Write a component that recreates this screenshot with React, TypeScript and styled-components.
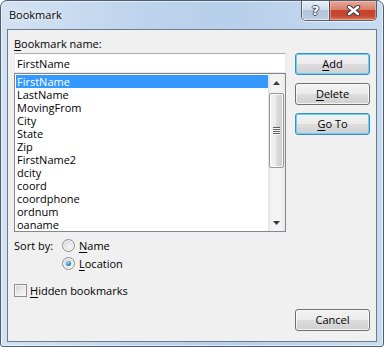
import styled, { createGlobalStyle, css } from 'styled-components'

const GlobalStyle = createGlobalStyle`
  html, body {
    margin: 0;
    padding: 0;
    background: #ffffff;
  }
  body {
    font-family: "Segoe UI", "Open Sans", "Noto Sans", sans-serif;
    font-size: 11px;
    color: #000;
  }
`

const bookmarks = [
  'FirstName', 'LastName', 'MovingFrom', 'City', 'State', 'Zip',
  'FirstName2', 'dcity', 'coord', 'coordphone', 'ordnum', 'oaname',
]

export default function App() {
  return (
    <>
      <GlobalStyle />
      <Window>
        <TitleBar>
          <Title>Bookmark</Title>
          <CaptionGroup>
            <HelpButton>?</HelpButton>
            <CloseButton>
              <svg width="15" height="11" viewBox="0 0 15 11">
                <path d="M3 2 L12 9 M12 2 L3 9" stroke="#3b3f47" strokeWidth="4.4" strokeLinecap="round" />
                <path d="M3 2 L12 9 M12 2 L3 9" stroke="#ffffff" strokeWidth="2.4" strokeLinecap="round" />
              </svg>
            </CloseButton>
          </CaptionGroup>
        </TitleBar>

        <Client>
          <Main>
            <Label><U>B</U>ookmark name:</Label>
            <LeftCol>
              <NameInput value="FirstName" readOnly />
              <ListBox>
                <Items>
                  {bookmarks.map((b, i) => (
                    <Item key={b} $selected={i === 0}>{b}</Item>
                  ))}
                </Items>
                <ScrollBar>
                  <Arrow>
                    <svg width="7" height="4" viewBox="0 0 7 4"><path d="M0 4 L3.5 0 L7 4 Z" fill="#3a3a3a" /></svg>
                  </Arrow>
                  <Track>
                    <Thumb>
                      <Grip />
                      <Grip />
                      <Grip />
                      <Grip />
                    </Thumb>
                  </Track>
                  <Arrow>
                    <svg width="7" height="4" viewBox="0 0 7 4"><path d="M0 0 L7 0 L3.5 4 Z" fill="#3a3a3a" /></svg>
                  </Arrow>
                </ScrollBar>
              </ListBox>

              <SortGroup>
                <SortLabel>Sort by:</SortLabel>
                <Options>
                  <Option>
                    <Radio />
                    <span><U>N</U>ame</span>
                  </Option>
                  <Option>
                    <Radio $checked />
                    <span><U>L</U>ocation</span>
                  </Option>
                </Options>
              </SortGroup>

              <CheckRow>
                <CheckBox />
                <span><U>H</U>idden bookmarks</span>
              </CheckRow>
            </LeftCol>

            <Buttons>
              <Button $default><U>A</U>dd</Button>
              <Button><U>D</U>elete</Button>
              <Button $default><U>G</U>o To</Button>
            </Buttons>
          </Main>

          <Footer>
            <Button>Cancel</Button>
          </Footer>
        </Client>
      </Window>
    </>
  )
}

const Window = styled.div`
  box-sizing: border-box;
  width: 384px;
  height: 347px;
  border: 1px solid #4f5d70;
  border-radius: 7px 7px 3px 3px;
  background: linear-gradient(to right, #d3e2f3 0%, #bcd3ec 40%, #b6cfea 60%, #c9dbef 100%);
  box-shadow: inset 0 0 0 1px rgba(255, 255, 255, .55);
  padding: 0 6px 4px;
  display: flex;
  flex-direction: column;
`

const TitleBar = styled.div`
  height: 28px;
  display: flex;
  align-items: flex-start;
`

const Title = styled.div`
  margin: 6px 0 0 2px;
  line-height: 15px;
  font-size: 11px;
  text-shadow: 0 0 6px rgba(255, 255, 255, .9), 0 0 2px rgba(255, 255, 255, .8);
`

const CaptionGroup = styled.div`
  margin-left: auto;
  display: flex;
  height: 19px;
  border: 1px solid #545e6e;
  border-top: none;
  border-radius: 0 0 5px 5px;
  overflow: hidden;
  box-shadow: 0 1px 0 rgba(255, 255, 255, .6);
`

const HelpButton = styled.div`
  width: 27px;
  display: flex;
  justify-content: center;
  align-items: center;
  font-family: "DejaVu Sans", sans-serif;
  font-weight: bold;
  font-size: 13px;
  color: #fff;
  text-shadow: 1px 0 0 #4a5260, -1px 0 0 #4a5260, 0 1px 0 #4a5260, 0 -1px 0 #4a5260;
  background: linear-gradient(to bottom, #e6eef8 0%, #cfdcec 45%, #b3c4d9 50%, #bccde2 100%);
  box-shadow: inset 0 0 0 1px rgba(255, 255, 255, .5);
`

const CloseButton = styled.div`
  width: 46px;
  border-left: 1px solid #5b4a4a;
  display: flex;
  justify-content: center;
  align-items: center;
  background: linear-gradient(to bottom, #e8a899 0%, #d7806b 45%, #c4432d 50%, #c84a33 80%, #dc7d60 100%);
  box-shadow: inset 0 0 0 1px rgba(255, 210, 200, .45);
`

const Client = styled.div`
  flex: 1;
  border: 1px solid #6b7c90;
  background: #f0f0f0;
  padding: 6px 6px 10px;
  display: flex;
  flex-direction: column;
`

const Main = styled.div`
  display: grid;
  grid-template-columns: 272px 75px;
  column-gap: 9px;
`

const Label = styled.div`
  grid-column: 1 / 3;
  line-height: 15px;
  margin-bottom: 2px;
`

const U = styled.span`
  text-decoration: underline;
  text-underline-offset: 2px;
`

const LeftCol = styled.div`
  display: flex;
  flex-direction: column;
`

const NameInput = styled.input`
  box-sizing: border-box;
  width: 100%;
  height: 20px;
  margin: 0;
  border: 1px solid #e3e9ef;
  border-top-color: #abadb3;
  padding: 0 2px;
  font: inherit;
  color: #000;
  background: #fff;
  outline: none;
`

const ListBox = styled.div`
  box-sizing: border-box;
  height: 159px;
  border: 1px solid #828790;
  background: #fff;
  display: flex;
`

const Items = styled.div`
  flex: 1;
  padding: 1px 0 0 1px;
  overflow: hidden;
`

const Item = styled.div<{ $selected?: boolean }>`
  height: 13px;
  line-height: 13px;
  padding-left: 1px;
  white-space: nowrap;
  ${p => p.$selected && css`
    background: #3399ff;
    color: #fff;
  `}
`

const ScrollBar = styled.div`
  width: 17px;
  display: flex;
  flex-direction: column;
  background: linear-gradient(to right, #e3e3e3 0%, #f3f3f3 20%, #f3f3f3 80%, #e8e8e8 100%);
`

const Arrow = styled.div`
  height: 17px;
  display: flex;
  justify-content: center;
  align-items: center;
`

const Track = styled.div`
  flex: 1;
  padding: 2px 1px 0;
`

const Thumb = styled.div`
  box-sizing: border-box;
  height: 75px;
  border: 1px solid #979797;
  border-radius: 2px;
  background: linear-gradient(to right, #f4f4f4 0%, #eaeaea 45%, #d8d8d8 55%, #cfcfcf 100%);
  box-shadow: inset 0 0 0 1px rgba(255, 255, 255, .8);
  display: flex;
  flex-direction: column;
  justify-content: center;
  align-items: center;
  gap: 1px;
`

const Grip = styled.div`
  width: 7px;
  height: 1px;
  background: #5e5e5e;
  box-shadow: 0 1px 0 #f8f8f8;
`

const SortGroup = styled.div`
  display: flex;
  margin-top: 7px;
`

const SortLabel = styled.div`
  width: 48px;
  line-height: 13px;
`

const Options = styled.div`
  display: flex;
  flex-direction: column;
  gap: 5px;
`

const Option = styled.div`
  display: flex;
  align-items: center;
  gap: 4px;
  line-height: 13px;
  height: 13px;
`

const Radio = styled.span<{ $checked?: boolean }>`
  box-sizing: border-box;
  width: 13px;
  height: 13px;
  border-radius: 50%;
  border: 1px solid #8e8f8f;
  background: radial-gradient(circle at 60% 65%, #f6f6f6 0%, #e3e3e3 45%, #cbcbcb 100%);
  box-shadow: inset 0 0 0 1px rgba(255, 255, 255, .7);
  position: relative;
  ${p => p.$checked && css`
    &::after {
      content: '';
      position: absolute;
      inset: 3px;
      border-radius: 50%;
      background: radial-gradient(circle at 40% 35%, #a8e2fb 0%, #2b8ac8 55%, #0f4f82 100%);
    }
  `}
`

const CheckRow = styled.div`
  display: flex;
  align-items: center;
  gap: 3px;
  margin-top: 14px;
  height: 13px;
  line-height: 13px;
`

const CheckBox = styled.span`
  box-sizing: border-box;
  width: 13px;
  height: 13px;
  border: 1px solid #8e8f8f;
  background: linear-gradient(135deg, #d2d2d2 0%, #e8e8e8 50%, #fbfbfb 100%);
  box-shadow: inset 0 0 0 1px #f4f4f4;
`

const Buttons = styled.div`
  display: flex;
  flex-direction: column;
  gap: 8px;
`

const Button = styled.button<{ $default?: boolean }>`
  box-sizing: border-box;
  width: 75px;
  height: 22px;
  padding: 0;
  margin: 0;
  border: 1px solid #707070;
  border-radius: 3px;
  background: linear-gradient(to bottom, #f2f2f2 0%, #ebebeb 48%, #dddddd 52%, #cfcfcf 100%);
  box-shadow: inset 0 0 0 1px rgba(255, 255, 255, .75);
  font: inherit;
  line-height: 18px;
  color: #000;
  ${p => p.$default && css`
    border-color: #3c8dc4;
    box-shadow: inset 0 0 0 1px #62d2f6;
  `}
`

const Footer = styled.div`
  margin-top: auto;
  display: flex;
  justify-content: flex-end;
`
